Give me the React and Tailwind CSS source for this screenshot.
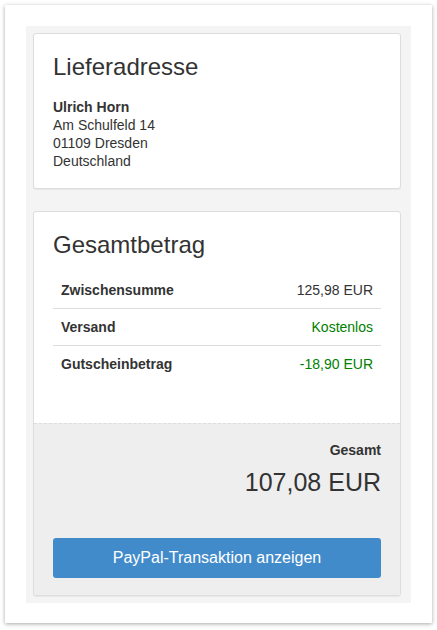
// App.jsx - Bestellübersicht (Lieferadresse + Gesamtbetrag)

const address = {
  name: "Ulrich Horn",
  street: "Am Schulfeld 14",
  city: "01109 Dresden",
  country: "Deutschland",
};

const rows = [
  { label: "Zwischensumme", value: "125,98 EUR", className: "text-[#333]" },
  { label: "Versand", value: "Kostenlos", className: "text-[#008000]" },
  { label: "Gutscheinbetrag", value: "-18,90 EUR", className: "text-[#008000]" },
];

const Card = ({ children, className = "" }) => (
  <div
    className={`w-[368px] bg-white border border-[#dddddd] rounded-[3px] shadow-[0_1px_1px_rgba(0,0,0,0.05)] ${className}`}
  >
    {children}
  </div>
);

const App = () => {
  return (
    <div className="bg-white min-h-screen p-[5px] font-['Liberation_Sans',Arial,sans-serif] text-[#333]">
      <div className="w-[427px] h-[618px] bg-white shadow-[0_1px_4px_rgba(0,0,0,0.35)] p-[21px]">
        <div className="h-[577px] bg-[#f4f4f4] p-[7px] flex flex-col gap-[22px]">
          {/* Lieferadresse */}
          <Card className="px-[19px] pt-[20px] pb-[18px]">
            <h2 className="text-[24px] leading-[26px] font-normal">Lieferadresse</h2>
            <div className="mt-[18px] text-[14px] leading-[18px]">
              <p className="font-bold">{address.name}</p>
              <p>{address.street}</p>
              <p>{address.city}</p>
              <p>{address.country}</p>
            </div>
          </Card>

          {/* Gesamtbetrag */}
          <Card className="overflow-hidden">
            <div className="px-[19px] pt-[20px] pb-[41px]">
              <h2 className="text-[24px] leading-[26px] font-normal">Gesamtbetrag</h2>
              <table className="mt-[14px] w-full text-[14px] leading-[20px] border-collapse">
                <tbody>
                  {rows.map((row, i) => (
                    <tr key={row.label} className={i > 0 ? "border-t border-[#dddddd]" : ""}>
                      <td className="px-[8px] py-[8px] font-bold">{row.label}</td>
                      <td className={`px-[8px] py-[8px] text-right ${row.className}`}>
                        {row.value}
                      </td>
                    </tr>
                  ))}
                </tbody>
              </table>
            </div>
            <div className="bg-[#eeeeee] border-t border-dashed border-[#dddddd] px-[19px] pt-[16px] pb-[19px]">
              <p className="text-right text-[14px] leading-[20px] font-bold">Gesamt</p>
              <p className="mt-[7px] text-right text-[25px] leading-[30px]">107,08 EUR</p>
              <button className="mt-[41px] w-full h-[40px] rounded-[3px] bg-[#428bca] text-white text-[16px]">
                PayPal-Transaktion anzeigen
              </button>
            </div>
          </Card>
        </div>
      </div>
    </div>
  );
};

export default App;
